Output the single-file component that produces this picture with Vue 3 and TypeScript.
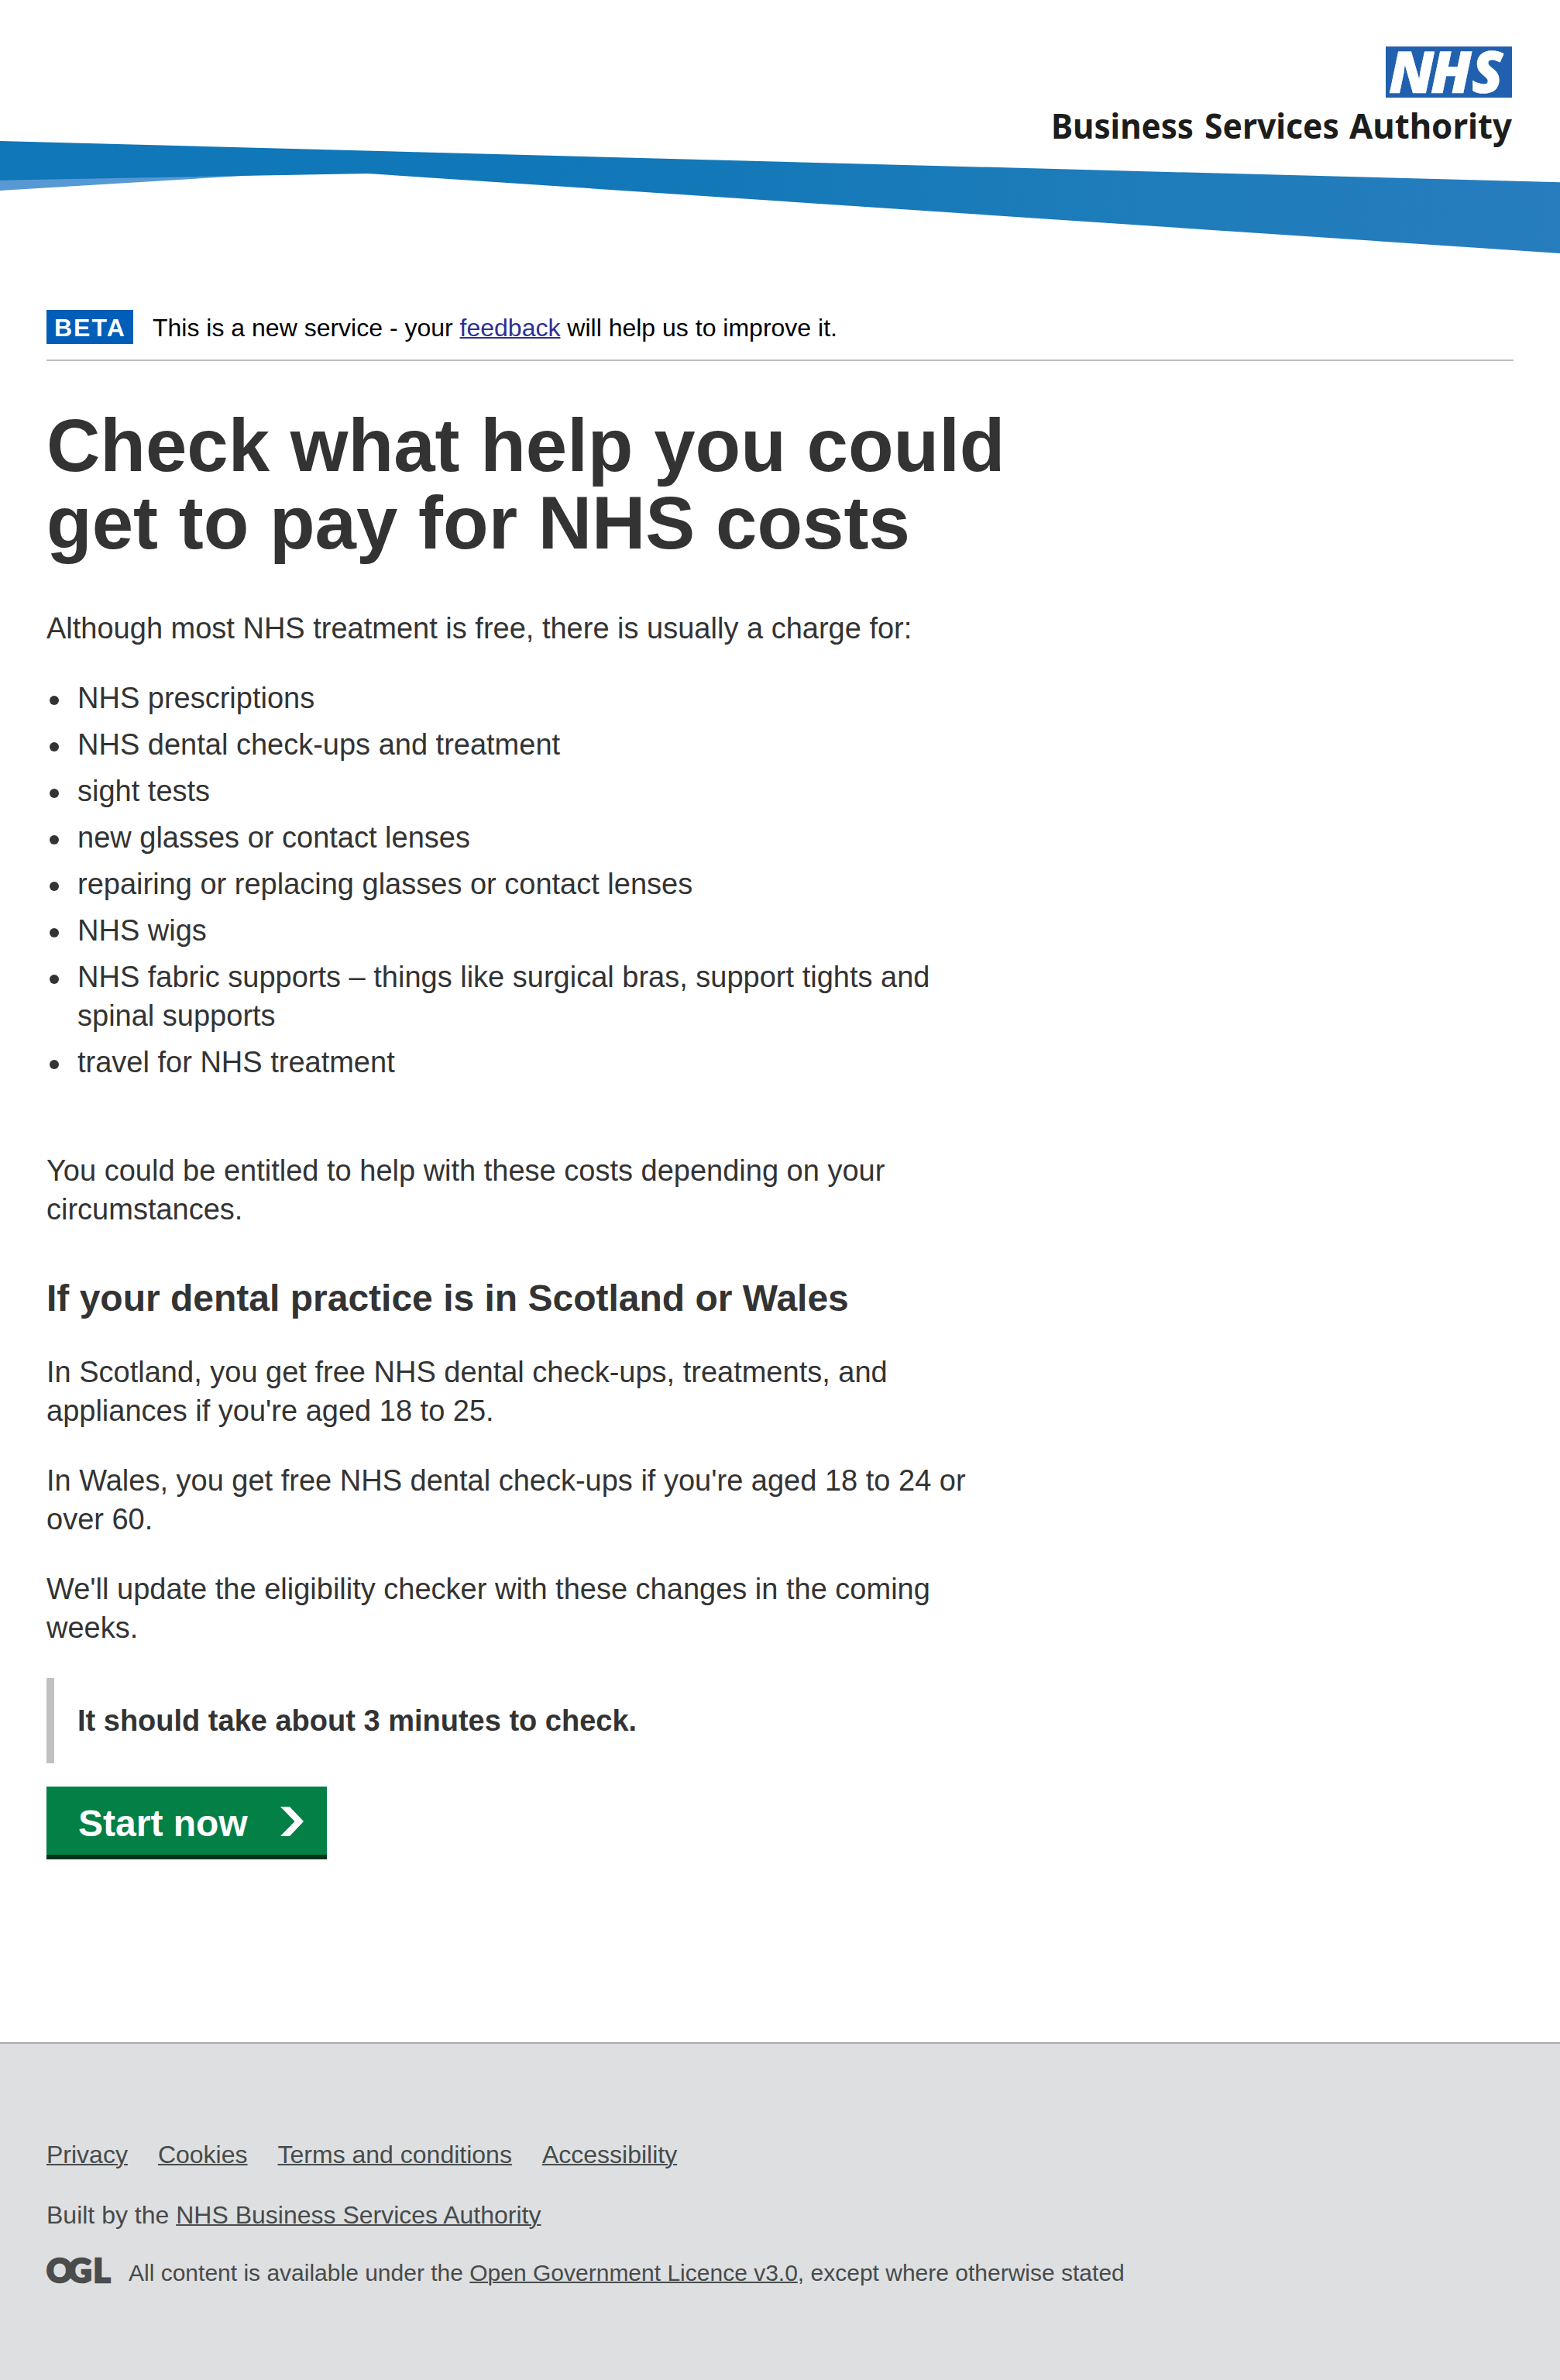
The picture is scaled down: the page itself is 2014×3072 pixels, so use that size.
<script setup lang="ts">
const charges: string[] = [
  'NHS prescriptions',
  'NHS dental check-ups and treatment',
  'sight tests',
  'new glasses or contact lenses',
  'repairing or replacing glasses or contact lenses',
  'NHS wigs',
  'NHS fabric supports – things like surgical bras, support tights and spinal supports',
  'travel for NHS treatment',
]

const footerLinks: string[] = ['Privacy', 'Cookies', 'Terms and conditions', 'Accessibility']
</script>

<template>
  <div class="page">
    <header class="header">
      <svg class="swoosh" viewBox="0 0 2014 340" width="2014" height="340" aria-hidden="true">
        <defs>
          <linearGradient id="band" x1="0" x2="1" y1="0" y2="0">
            <stop offset="0" stop-color="#1077b8" />
            <stop offset="0.35" stop-color="#1077b8" />
            <stop offset="0.7" stop-color="#1d7cba" />
            <stop offset="1" stop-color="#277dbe" />
          </linearGradient>
        </defs>
        <path d="M0 231L330 226L0 246Z" fill="#5799d5" />
        <path d="M0 182L2014 235.3V327L475 224L0 232.7Z" fill="url(#band)" />
      </svg>
      <svg class="brand" viewBox="0 0 600 140" width="600" height="140" role="img" aria-label="NHS Business Services Authority">
        <rect x="437" y="0" width="163" height="66" fill="#2160ae" />
        <text class="nhs" x="441 495 548" y="60">NHS</text>
        <g class="org">
          <text x="5" y="119" textLength="184" lengthAdjust="spacingAndGlyphs">Business</text>
          <text x="203" y="119" textLength="174" lengthAdjust="spacingAndGlyphs">Services</text>
          <text x="390" y="119" textLength="210" lengthAdjust="spacingAndGlyphs">Authority</text>
        </g>
      </svg>
    </header>

    <div class="phase">
      <strong class="tag">BETA</strong>
      <span>This is a new service - your <a class="feedback" href="#">feedback</a> will help us to improve it.</span>
    </div>

    <main class="main">
      <h1>Check what help you could get to pay for NHS costs</h1>
      <p>Although most NHS treatment is free, there is usually a charge for:</p>
      <ul>
        <li v-for="item in charges" :key="item"><span>{{ item }}</span></li>
      </ul>
      <p>You could be entitled to help with these costs depending on your circumstances.</p>
      <h2>If your dental practice is in Scotland or Wales</h2>
      <p>In Scotland, you get free NHS dental check-ups, treatments, and appliances if you're aged 18 to 25.</p>
      <p>In Wales, you get free NHS dental check-ups if you're aged 18 to 24 or over 60.</p>
      <p>We'll update the eligibility checker with these changes in the coming weeks.</p>
      <div class="inset">It should take about 3 minutes to check.</div>
      <a class="start" href="#">
        <span>Start now</span>
        <svg viewBox="0 0 30 38" width="30" height="38" aria-hidden="true">
          <path d="M0 0H12L30 19L12 38H0L18.5 19Z" fill="#fff" />
        </svg>
      </a>
    </main>

    <footer class="footer">
      <nav class="links">
        <a v-for="link in footerLinks" :key="link" href="#">{{ link }}</a>
      </nav>
      <div class="built">Built by the <a href="#">NHS Business Services Authority</a></div>
      <div class="licence">
        <svg viewBox="0 0 82 34" width="82" height="34" role="img" aria-label="OGL">
          <text class="ogl" x="0 28 60.5" y="31.5">OGL</text>
        </svg>
        <span>All content is available under the <a href="#">Open Government Licence v3.0</a>, except where otherwise stated</span>
      </div>
    </footer>
  </div>
</template>

<style>
body {
  margin: 0;
  background: #fff;
}
</style>

<style scoped>
.page {
  width: 2014px;
  height: 3072px;
  display: flex;
  flex-direction: column;
  overflow: hidden;
  background: #fff;
  color: #333;
  font-family: "Liberation Sans", Arial, sans-serif;
  font-size: 38px;
  line-height: 50px;
}
.header {
  position: relative;
  height: 340px;
  box-sizing: border-box;
  padding: 60px 62px 0 0;
  display: flex;
  justify-content: flex-end;
  flex: none;
}
.swoosh {
  position: absolute;
  left: 0;
  top: 0;
}
.brand {
  position: relative;
  overflow: visible;
}
.nhs {
  font: italic 800 74px "Open Sans", "Noto Sans", sans-serif;
  fill: #fff;
  stroke: #fff;
  stroke-width: 0.6px;
}
.org {
  font: 700 45px "Noto Sans", "Open Sans", sans-serif;
  fill: #1d1d1b;
}
.phase {
  display: flex;
  margin: 60px 60px 0;
  padding-bottom: 20px;
  border-bottom: 2px solid #bfbfbf;
  font-size: 32px;
  line-height: 46px;
  height: 44px;
  color: #000;
  flex: none;
}
.tag {
  width: 102px;
  height: 44px;
  padding-left: 10px;
  margin-right: 25px;
  background: #005eb8;
  color: #fff;
  letter-spacing: 2px;
}
.feedback {
  color: #2e3192;
}
a {
  color: inherit;
  text-decoration-thickness: 2px;
}
.main {
  width: 1260px;
  padding-left: 60px;
  flex: none;
  height: 2170px;
}
h1 {
  margin: 59px -20px 61px 0;
  font-size: 96px;
  line-height: 100px;
}
h2 {
  margin: 60px 0 40px;
  font-size: 48px;
  line-height: 60px;
}
p {
  margin: 0 0 40px;
  max-width: 1220px;
}
ul {
  list-style: none;
  margin: 0 0 90px;
  padding-left: 4px;
  max-width: 1216px;
  display: flex;
  flex-direction: column;
  gap: 10px;
}
li {
  display: flex;
  gap: 24px;
}
li::before {
  content: "";
  flex: none;
  width: 12px;
  height: 12px;
  margin-top: 22px;
  border-radius: 50%;
  background: #333;
}
.inset {
  border-left: 10px solid #bfc0c2;
  padding: 30px;
  margin-bottom: 30px;
  font-weight: 700;
}
.start {
  display: flex;
  box-sizing: border-box;
  width: 362px;
  height: 94px;
  padding: 18px 30px 0 41px;
  justify-content: space-between;
  background: #038046;
  border-bottom: 6px solid #00331a;
  color: #fff;
  font-size: 48px;
  font-weight: 700;
  line-height: 60px;
  text-decoration: none;
}
.start svg {
  margin-top: 8px;
}
.footer {
  flex: 1;
  border-top: 2px solid #a8abae;
  background: #dedfe1;
  padding: 119px 60px 0;
  color: #464b4b;
  font-size: 32px;
  line-height: 48px;
}
.links {
  display: flex;
  gap: 39px;
}
.built {
  margin-top: 30px;
}
.licence {
  display: flex;
  margin-top: 29px;
  font-size: 30px;
  line-height: 44px;
  gap: 24px;
}
.licence svg {
  overflow: visible;
  margin-top: 2px;
}
.ogl {
  font: 900 42px Lato, sans-serif;
  fill: #4b4c4e;
  stroke: #4b4c4e;
  stroke-width: 2.6px;
}
</style>
